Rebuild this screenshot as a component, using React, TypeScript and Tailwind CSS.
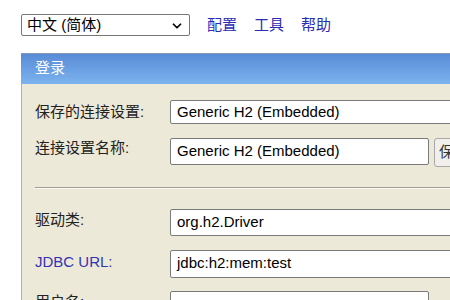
import { ChevronDown } from "lucide-react";

const font = "font-['Liberation_Sans','Noto_Sans_CJK_SC',sans-serif]";

function Field({ value, wide, top }: { value: string; wide?: boolean; top?: boolean }) {
  return (
    <div
      className={`flex bg-white border border-[#7a7a7a] rounded-[2px] pl-[6px] text-[15px] text-black whitespace-nowrap ${
        top ? "items-start pt-[3px]" : "items-center"
      } ${wide ? "w-[320px] shrink-0" : "w-[259px] shrink-0"}`}
    >
      {value}
    </div>
  );
}

export default function App() {
  const links = ["配置", "工具", "帮助"];

  return (
    <div className={`${font} bg-white h-[300px] w-[450px] overflow-hidden pl-[21px] pt-[14px]`}>
      <div className="flex items-center">
        <div className="relative flex items-center w-[169px] h-[22px] border border-[#767676] rounded-[2px] bg-white pl-[5px] text-[15px] text-black">
          中文 (简体)
          <ChevronDown size={14} strokeWidth={3} className="absolute right-[5px] top-[4px] text-black" />
        </div>
        <div className="flex gap-[17px] ml-[17px] text-[15px] text-[#2b2bb3]">
          {links.map((l) => (
            <span key={l}>{l}</span>
          ))}
        </div>
      </div>

      <div className="mt-[16px] w-[460px]">
        <div className="h-[31px] flex items-center pl-[14px] text-[15px] text-white border-t border-[#8497b5] bg-gradient-to-b from-[#588bd6] to-[#7db3ef]">
          登录
        </div>
        <div className="bg-[#ece9d8] border-l border-[#b4b2a6] pl-[13px] pt-[18px] pb-[20px] text-[15px] text-[#222]">
          <div className="flex items-center h-[21px]">
            <div className="w-[135px] shrink-0">保存的连接设置:</div>
            <Field value="Generic H2 (Embedded)" wide />
          </div>

          <div className="flex items-start mt-[15px]">
            <div className="w-[135px] shrink-0 -mt-[1px]">连接设置名称:</div>
            <div className="flex items-start gap-[5px]">
              <div className="h-[27px] flex">
                <Field value="Generic H2 (Embedded)" />
              </div>
              <div className="h-[29px] w-[40px] shrink-0 border border-[#a8a8a8] rounded-[3px] bg-[#f0efec] flex items-center pl-[4px] text-[15px] text-[#333]">
                保存
              </div>
            </div>
          </div>

          <div className="mt-[20px] border-t border-[#9f9d94] border-b border-b-[#faf9f4]" />

          <div className="flex items-center mt-[20px] h-[27px]">
            <div className="w-[135px] shrink-0 pb-[3px]">驱动类:</div>
            <div className="h-[27px] flex">
              <Field value="org.h2.Driver" wide />
            </div>
          </div>

          <div className="flex items-center mt-[14px] h-[28px]">
            <div className="w-[135px] shrink-0 pb-[3px] text-[#3333b5]">JDBC URL:</div>
            <div className="h-[28px] flex">
              <Field value="jdbc:h2:mem:test" wide />
            </div>
          </div>

          <div className="flex items-center mt-[13px] h-[27px]">
            <div className="w-[135px] shrink-0 pb-[3px]">用户名:</div>
            <div className="h-[27px] flex">
              <Field value="sa" top />
            </div>
          </div>
        </div>
      </div>
    </div>
  );
}
